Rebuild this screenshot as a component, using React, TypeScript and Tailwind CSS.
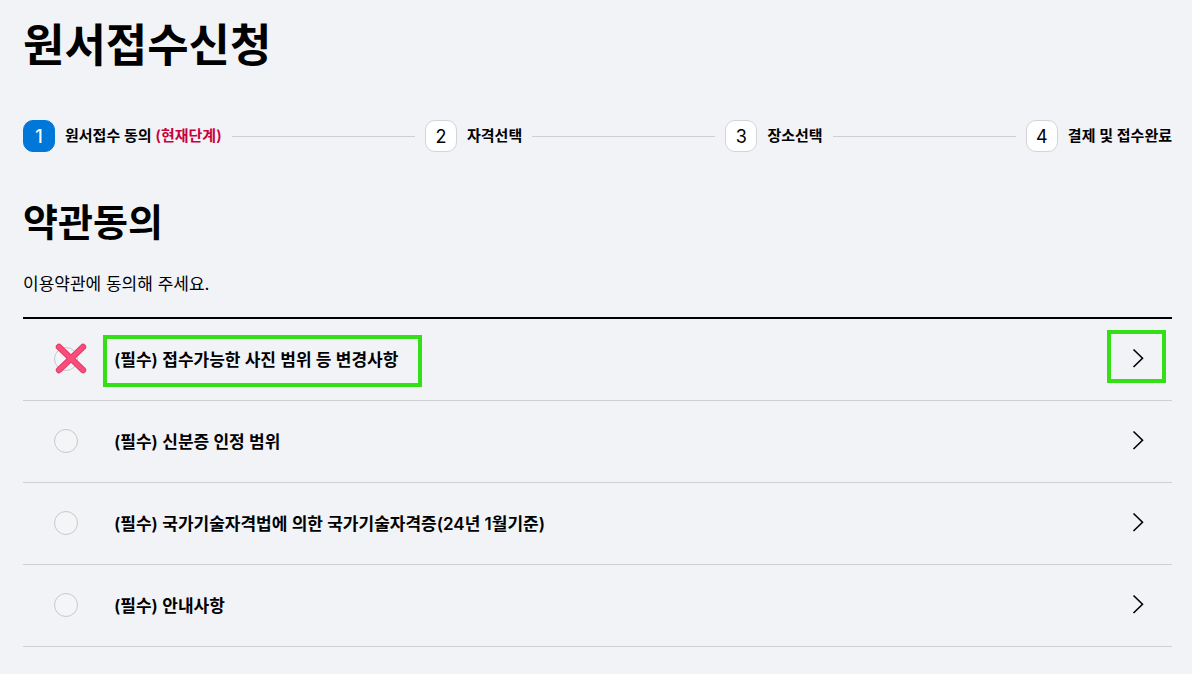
import React, { useState } from 'react';
import clsx from 'clsx';

const steps = ['원서접수 동의', '자격선택', '장소선택', '결제 및 접수완료'];

const terms = [
  { id: 'photo', label: '(필수) 접수가능한 사진 범위 등 변경사항', marked: true },
  { id: 'identity', label: '(필수) 신분증 인정 범위' },
  { id: 'qualification', label: '(필수) 국가기술자격법에 의한 국가기술자격증(24년 1월기준)' },
  { id: 'guide', label: '(필수) 안내사항' },
];

const App = () => {
  return (
    <main className="min-h-screen bg-[#f1f3f7] pl-[23px] pr-5 pt-3.5 text-black font-['Inter','Noto_Sans_CJK_KR',sans-serif]">
      <h1 className="text-[45px] leading-16 font-bold">원서접수신청</h1>
      <Steps current={0} />
      <h2 className="mt-[42px] text-[38px] leading-14 font-bold">약관동의</h2>
      <p className="mt-[22px] text-[17px] leading-6">이용약관에 동의해 주세요.</p>
      <ul className="mt-[21px] border-t-2 border-black">
        {terms.map((term) => (
          <Term key={term.id} {...term} />
        ))}
      </ul>
    </main>
  );
};

const Steps = ({ current }: { current: number }) => {
  return (
    <ol className="mt-[42px] flex items-center gap-2.5">
      {steps.map((step, index) => (
        <React.Fragment key={step}>
          {index > 0 && <li aria-hidden="true" className="h-px flex-1 bg-[#cdd0d5]" />}
          <li className="flex items-center gap-2.5">
            <span
              className={clsx(
                'flex size-8 items-center justify-center rounded-[10px] border pt-0.5 text-[18px] leading-6',
                index === current ? 'border-[#0077d9] bg-[#0077d9] font-medium text-white' : 'border-[#d2d4d9] bg-white'
              )}
            >
              {index + 1}
            </span>
            <span className="text-[15px] leading-6 font-semibold whitespace-nowrap">
              {step}
              {index === current && <strong className="font-semibold text-[#c8003c]"> (현재단계)</strong>}
            </span>
          </li>
        </React.Fragment>
      ))}
    </ol>
  );
};

type TermProps = { id: string; label: string; marked?: boolean };

const Term = ({ id, label, marked }: TermProps) => {
  const [agreed, setAgreed] = useState(false);
  return (
    <li className="flex h-[82px] items-center border-b border-[#cdd0d5] pb-0.5 pl-[31px] pr-[22px]">
      <span className="relative flex">
        <input
          id={id}
          type="checkbox"
          checked={agreed}
          onChange={(e) => setAgreed(e.target.checked)}
          className="size-6 cursor-pointer appearance-none rounded-full border border-[#c6c8ca] bg-[#f4f5f6] checked:bg-[#0077d9]"
        />
        {marked && <CrossMark />}
      </span>
      <label htmlFor={id} className="relative ml-9 cursor-pointer pt-0.5 text-[17px] leading-6 font-semibold">
        {label}
        {marked && <span className="pointer-events-none absolute -top-[11px] -right-6 -bottom-[15px] -left-[11px] border-4 border-[#35df17]" />}
      </label>
      <button type="button" aria-label={`${label} 보기`} className="relative ml-auto flex size-6 cursor-pointer items-center justify-center">
        <svg width="24" height="24" viewBox="0 0 24 24" fill="none" stroke="currentColor" strokeWidth="1.6">
          <path d="M7.5 2.5 16.5 11.2 7.5 20" />
        </svg>
        {marked && <span className="pointer-events-none absolute -top-[17px] -right-4 -bottom-3 -left-[19px] border-4 border-[#35df17]" />}
      </button>
    </li>
  );
};

const CrossMark = () => (
  <svg className="pointer-events-none absolute -top-1 left-px" width="32" height="32" viewBox="0 0 32 32" fill="none" strokeLinecap="round">
    <path d="M4 4 28 27M28 4 4 27" stroke="#e43d68" strokeWidth="6.4" />
    <path d="M4 4 28 27M28 4 4 27" stroke="#f94d7b" strokeWidth="4.4" />
  </svg>
);

export default App;
